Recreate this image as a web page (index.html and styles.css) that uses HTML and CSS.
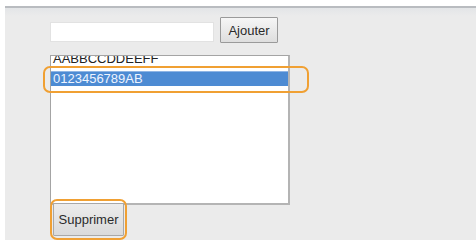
FILE: index.html
```html
<!DOCTYPE html>
<html lang="fr">
<head>
    <meta charset="UTF-8">
    <meta name="viewport" content="width=device-width, initial-scale=1.0">
    <title>Liste</title>
    <link rel="stylesheet" href="styles.css">
</head>
<body>
    <div class="panel">
        <div class="add-row">
            <input type="text" class="text-input">
            <button class="btn add-button">Ajouter</button>
        </div>
        <div class="list-wrap">
            <div class="listbox">
                <div class="item first">AABBCCDDEEFF</div>
                <div class="item selected">0123456789AB</div>
            </div>
            <div class="mark mark-row"></div>
        </div>
        <div class="delete-wrap">
            <button class="btn delete-button">Supprimer</button>
            <div class="mark mark-button"></div>
        </div>
    </div>
</body>
</html>
```

FILE: styles.css
```css
body {
    margin: 0;
    background-color: white;
    font-family: "Liberation Sans", Arial, sans-serif;
    font-size: 13px;
}
.panel {
    margin: 6px 0 0 5px;
    height: 234px;
    border-top: 2px solid #b9bcc0;
    background: linear-gradient(#e3e5e7, #ebebeb 8px);
    padding: 9px 0 0 45px;
    box-sizing: border-box;
}
.add-row {
    display: flex;
    align-items: center;
    gap: 6px;
}
.text-input {
    width: 164px;
    height: 20px;
    margin: 4px 0 0 0;
    padding: 0;
    border: 1px solid #e2e2e2;
    background-color: white;
    box-sizing: border-box;
}
.btn {
    font-family: "Liberation Sans", Arial, sans-serif;
    font-size: 13px;
    color: #2a2a2a;
    background: linear-gradient(#f6f6f6, #dedede);
    border: 1px solid #9a9a9a;
    border-radius: 1px;
    padding: 0;
    box-sizing: border-box;
    cursor: pointer;
}
.add-button {
    width: 58px;
    height: 26px;
}
.list-wrap {
    position: relative;
    width: 240px;
    margin-top: 12px;
}
.listbox {
    height: 150px;
    background-color: white;
    border: 1px solid #a4a4a4;
    border-right-width: 2px;
    border-bottom-width: 2px;
    border-right-color: #b4b4b4;
    border-bottom-color: #b4b4b4;
    box-sizing: border-box;
    overflow: hidden;
}
.item {
    height: 15px;
    line-height: 15px;
    padding-left: 2px;
    color: #222;
    white-space: nowrap;
}
.item.first {
    height: 20px;
    margin-top: -5px;
    line-height: 16px;
}
.item.selected {
    background-color: #4d8bd3;
    border-top: 1px solid #8fb5e4;
    height: 14px;
    line-height: 14px;
    color: #eef4ff;
}
.mark {
    position: absolute;
    border: 2px solid #f0a033;
    border-radius: 7px;
}
.mark-row {
    top: 11px;
    left: -7px;
    width: 266px;
    height: 27px;
    box-sizing: border-box;
}
.delete-wrap {
    position: relative;
    width: 71px;
    margin: -2px 0 0 3px;
}
.delete-button {
    display: block;
    width: 71px;
    height: 33px;
    border-color: #a8a8a8;
    background: linear-gradient(#ececec, #dadada);
}
.mark-button {
    top: -4px;
    left: -3px;
    right: -3px;
    bottom: -4px;
}
```
